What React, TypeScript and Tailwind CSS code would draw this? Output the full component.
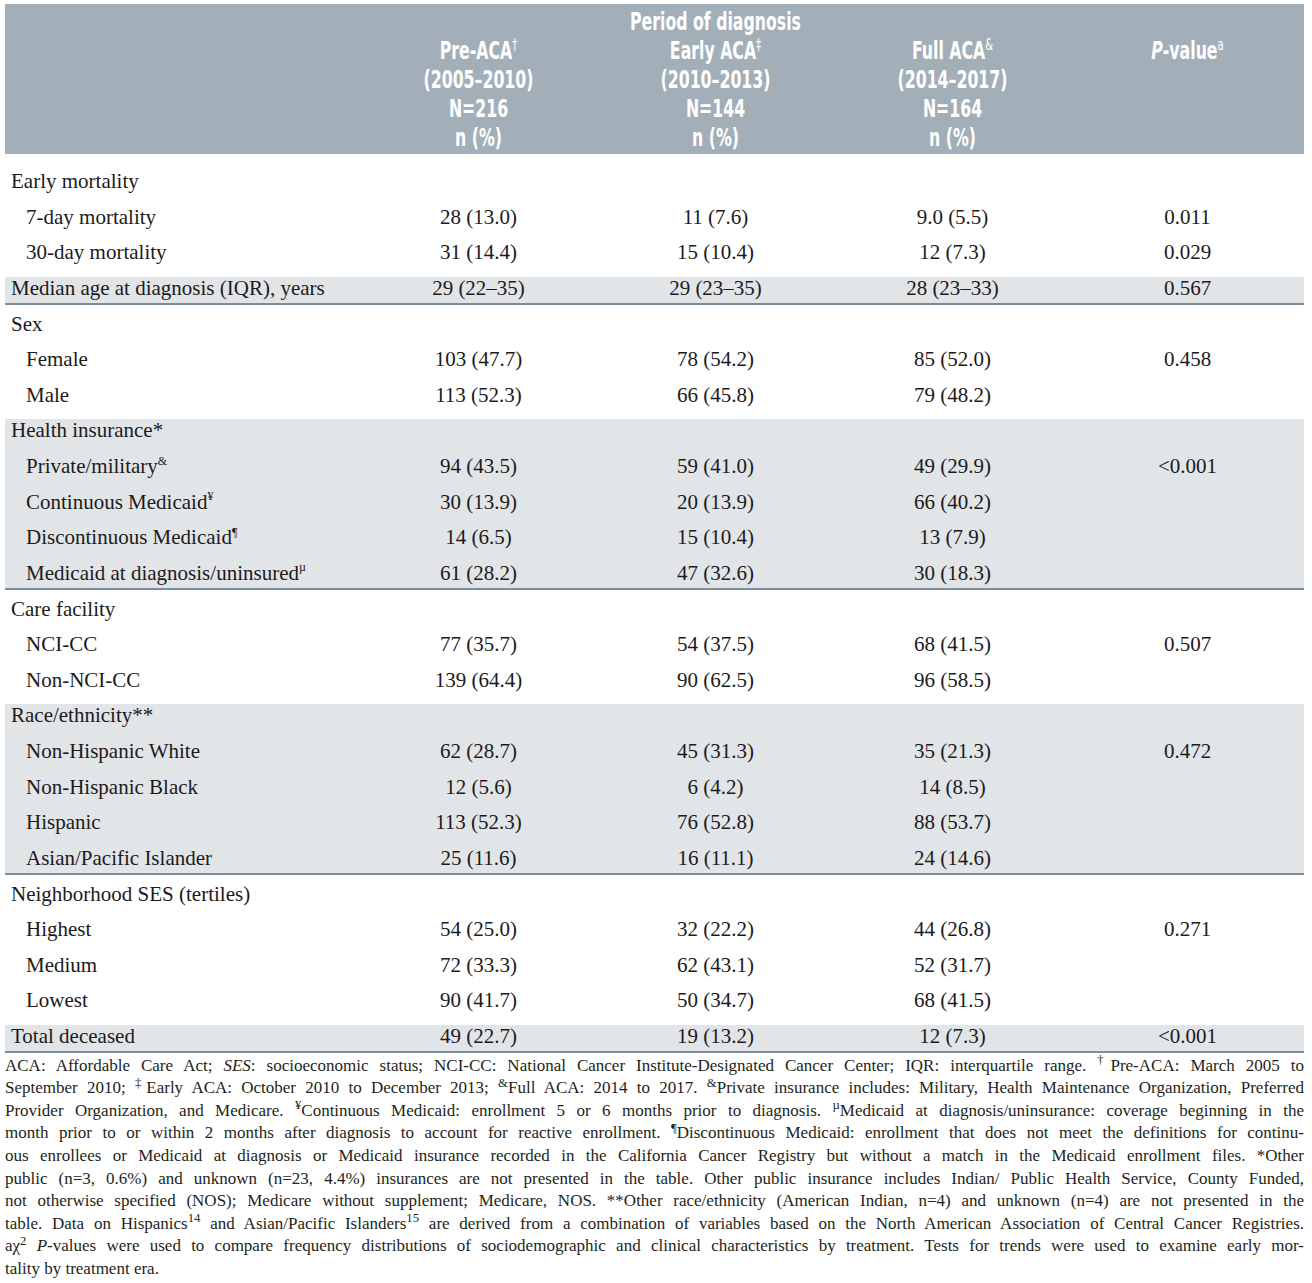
import type { ReactNode } from "react"

const COLS = "grid grid-cols-[355px_237px_237px_237px_233px]"
const HEAD_FONT = "font-['Liberation_Sans_Narrow','DejaVu_Sans_Condensed','Liberation_Sans',sans-serif]"

type Row = {
  label: ReactNode
  sub?: boolean
  values?: [string, string, string]
  p?: string
}

type Block = { shaded?: boolean; rows: Row[] }

const Sup = ({ children }: { children: ReactNode }) => (
  <sup className="text-[12px] top-[-0.7em]">{children}</sup>
)

const HeadSup = ({ children }: { children: ReactNode }) => (
  <sup className="text-[16px] top-[-0.55em] font-normal">{children}</sup>
)

const BLOCKS: Block[] = [
  {
    rows: [
      { label: "Early mortality" },
      { label: "7-day mortality", sub: true, values: ["28 (13.0)", "11 (7.6)", "9.0 (5.5)"], p: "0.011" },
      { label: "30-day mortality", sub: true, values: ["31 (14.4)", "15 (10.4)", "12 (7.3)"], p: "0.029" },
    ],
  },
  {
    shaded: true,
    rows: [
      { label: "Median age at diagnosis (IQR), years", values: ["29 (22–35)", "29 (23–35)", "28 (23–33)"], p: "0.567" },
    ],
  },
  {
    rows: [
      { label: "Sex" },
      { label: "Female", sub: true, values: ["103 (47.7)", "78 (54.2)", "85 (52.0)"], p: "0.458" },
      { label: "Male", sub: true, values: ["113 (52.3)", "66 (45.8)", "79 (48.2)"] },
    ],
  },
  {
    shaded: true,
    rows: [
      { label: "Health insurance*" },
      { label: <>Private/military<Sup>&amp;</Sup></>, sub: true, values: ["94 (43.5)", "59 (41.0)", "49 (29.9)"], p: "<0.001" },
      { label: <>Continuous Medicaid<Sup>¥</Sup></>, sub: true, values: ["30 (13.9)", "20 (13.9)", "66 (40.2)"] },
      { label: <>Discontinuous Medicaid<Sup>¶</Sup></>, sub: true, values: ["14 (6.5)", "15 (10.4)", "13 (7.9)"] },
      { label: <>Medicaid at diagnosis/uninsured<Sup>µ</Sup></>, sub: true, values: ["61 (28.2)", "47 (32.6)", "30 (18.3)"] },
    ],
  },
  {
    rows: [
      { label: "Care facility" },
      { label: "NCI-CC", sub: true, values: ["77 (35.7)", "54 (37.5)", "68 (41.5)"], p: "0.507" },
      { label: "Non-NCI-CC", sub: true, values: ["139 (64.4)", "90 (62.5)", "96 (58.5)"] },
    ],
  },
  {
    shaded: true,
    rows: [
      { label: "Race/ethnicity**" },
      { label: "Non-Hispanic White", sub: true, values: ["62 (28.7)", "45 (31.3)", "35 (21.3)"], p: "0.472" },
      { label: "Non-Hispanic Black", sub: true, values: ["12 (5.6)", "6 (4.2)", "14 (8.5)"] },
      { label: "Hispanic", sub: true, values: ["113 (52.3)", "76 (52.8)", "88 (53.7)"] },
      { label: "Asian/Pacific Islander", sub: true, values: ["25 (11.6)", "16 (11.1)", "24 (14.6)"] },
    ],
  },
  {
    rows: [
      { label: "Neighborhood SES (tertiles)" },
      { label: "Highest", sub: true, values: ["54 (25.0)", "32 (22.2)", "44 (26.8)"], p: "0.271" },
      { label: "Medium", sub: true, values: ["72 (33.3)", "62 (43.1)", "52 (31.7)"] },
      { label: "Lowest", sub: true, values: ["90 (41.7)", "50 (34.7)", "68 (41.5)"] },
    ],
  },
  {
    shaded: true,
    rows: [
      { label: "Total deceased", values: ["49 (22.7)", "19 (13.2)", "12 (7.3)"], p: "<0.001" },
    ],
  },
]

function TableRow({ row }: { row: Row }) {
  return (
    <div className={`${COLS} h-[35.625px] items-center leading-[35.625px]`}>
      <div className={row.sub ? "pl-[21px]" : "pl-[6px]"}>{row.label}</div>
      {(row.values ?? ["", "", ""]).map((v, i) => (
        <div key={i} className="text-center">{v}</div>
      ))}
      <div className="text-center">{row.p ?? ""}</div>
    </div>
  )
}

function Section({ block }: { block: Block }) {
  const body = block.rows.map((r, i) => <TableRow key={i} row={r} />)
  if (!block.shaded) return <div>{body}</div>
  // shaded band is inset a few px from the row slots, with a rule under it
  return (
    <div className="mt-[6px] mb-[2px] flex flex-col border-b-2 border-[#7d8c98] bg-[#e2e5e8]">
      <div className="-mt-[6px] -mb-[4px]">{body}</div>
    </div>
  )
}

// header text is a condensed bold face, so squeeze it horizontally
function HeadCol({ lines }: { lines: ReactNode[] }) {
  return (
    <div className="row-start-2 row-span-4 scale-x-[0.7] text-center">
      {lines.map((l, i) => (
        <div key={i}>{l}</div>
      ))}
    </div>
  )
}

const NOTES: ReactNode[] = [
  <>ACA: Affordable Care Act; <i>SES</i>: socioeconomic status; NCI-CC: National Cancer Institute-Designated Cancer Center; IQR: interquartile range. <sup>†</sup>Pre-ACA: March 2005 to</>,
  <>September 2010; <sup>‡</sup>Early ACA: October 2010 to December 2013; <sup>&amp;</sup>Full ACA: 2014 to 2017. <sup>&amp;</sup>Private insurance includes: Military, Health Maintenance Organization, Preferred</>,
  <>Provider Organization, and Medicare. <sup>¥</sup>Continuous Medicaid: enrollment 5 or 6 months prior to diagnosis. <sup>µ</sup>Medicaid at diagnosis/uninsurance: coverage beginning in the</>,
  <>month prior to or within 2 months after diagnosis to account for reactive enrollment. <sup>¶</sup>Discontinuous Medicaid: enrollment that does not meet the definitions for continu-</>,
  <>ous enrollees or Medicaid at diagnosis or Medicaid insurance recorded in the California Cancer Registry but without a match in the Medicaid enrollment files. *Other</>,
  <>public (n=3, 0.6%) and unknown (n=23, 4.4%) insurances are not presented in the table. Other public insurance includes Indian/ Public Health Service, County Funded,</>,
  <>not otherwise specified (NOS); Medicare without supplement; Medicare, NOS. **Other race/ethnicity (American Indian, n=4) and unknown (n=4) are not presented in the</>,
  <>table. Data on Hispanics<sup>14</sup> and Asian/Pacific Islanders<sup>15</sup> are derived from a combination of variables based on the North American Association of Central Cancer Registries.</>,
  <>aχ<sup>2</sup> <i>P</i>-values were used to compare frequency distributions of sociodemographic and clinical characteristics by treatment. Tests for trends were used to examine early mor-</>,
]

export default function App() {
  return (
    <div className="min-h-[1283px] bg-white pt-[4px] text-[#1c1a1b]">
      <div className="ml-[5px] w-[1299px]">
        <div className={`${COLS} bg-[#a3afb8] pt-[3px] pb-[2px] text-white font-bold text-[25px] leading-[29px] ${HEAD_FONT}`}>
          <div className="col-start-2 col-span-3 scale-x-[0.7] text-center">Period of diagnosis</div>
          <div className="col-start-1 row-start-2 row-span-4" />
          <HeadCol lines={[<>Pre-ACA<HeadSup>†</HeadSup></>, "(2005–2010)", "N=216", "n (%)"]} />
          <HeadCol lines={[<>Early ACA<HeadSup>‡</HeadSup></>, "(2010–2013)", "N=144", "n (%)"]} />
          <HeadCol lines={[<>Full ACA<HeadSup>&amp;</HeadSup></>, "(2014–2017)", "N=164", "n (%)"]} />
          <HeadCol lines={[<><i>P</i>-value<HeadSup>a</HeadSup></>]} />
        </div>

        <div className="mt-[10px] font-['Liberation_Serif',serif] text-[21px]">
          {BLOCKS.map((b, i) => (
            <Section key={i} block={b} />
          ))}
        </div>

        <div className="mt-[2px] font-['Liberation_Serif',serif] text-[17px] leading-[22.6px] text-[#231f20]">
          {NOTES.map((n, i) => (
            <p key={i} className="text-justify [text-align-last:justify]">{n}</p>
          ))}
          <p>tality by treatment era.</p>
        </div>
      </div>
    </div>
  )
}
